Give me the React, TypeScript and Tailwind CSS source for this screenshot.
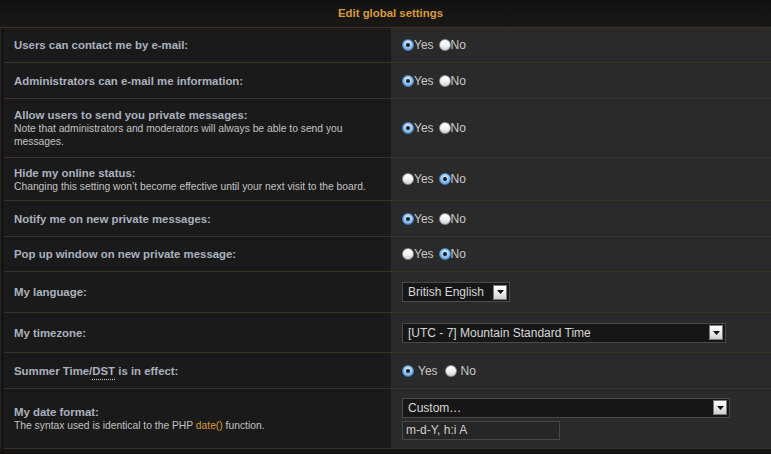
import React from "react";

function Radio({ checked }: { checked: boolean }) {
  return checked ? (
    <span className="relative inline-block w-[12px] h-[12px] rounded-full border border-[#4a7fb8] bg-[radial-gradient(circle_at_50%_35%,#e3f1fd_0%,#9cc9f2_45%,#4f95db_100%)] shrink-0">
      <span className="absolute left-1/2 top-1/2 w-[4px] h-[4px] -ml-[2px] -mt-[2px] rounded-full bg-[#0f1d2c]" />
    </span>
  ) : (
    <span className="inline-block w-[12px] h-[12px] rounded-full border border-[#8d8d8d] bg-[linear-gradient(#ffffff,#f4f4f4_50%,#d2d2d2)] shrink-0" />
  );
}

function YesNo({ yes, wide = false }: { yes: boolean; wide?: boolean }) {
  return (
    <div className="flex items-center text-[12px] text-[#c9c9c9]">
      <Radio checked={yes} />
      <span className={wide ? "ml-[4px]" : ""}>Yes</span>
      <span className={wide ? "ml-[7px]" : "ml-[5px]"} />
      <Radio checked={!yes} />
      <span className={wide ? "ml-[4px]" : ""}>No</span>
    </div>
  );
}

function Arrow() {
  return (
    <span className="flex items-center justify-center w-[14px] h-[15px] border border-[#7a7a7a] bg-[linear-gradient(#ffffff,#e6e6e6_60%,#cfcfcf)]">
      <svg width="7" height="4" viewBox="0 0 7 4">
        <path d="M0 0h7L3.5 4z" fill="#111" />
      </svg>
    </span>
  );
}

function Select({ text, w }: { text: string; w: string }) {
  return (
    <div
      className={`flex items-center justify-between h-[20px] ${w} bg-[#161616] border border-[#4a4a4a] pl-[5px] pr-[2px] text-[12px] text-[#d6d6d6]`}
    >
      <span>{text}</span>
      <Arrow />
    </div>
  );
}

function Row({
  h,
  title,
  desc,
  children,
}: {
  h: string;
  title: React.ReactNode;
  desc?: React.ReactNode;
  children: React.ReactNode;
}) {
  return (
    <div className={`flex ${h} border-b border-[#3b3228]`}>
      <div className="w-[388px] shrink-0 bg-[#1b1a1a] border-r border-[#2c2722] pl-[10px] pr-[10px] flex flex-col justify-center">
        <div className="text-[11.4px] leading-[14px] font-bold text-[#aab2bf]">{title}</div>
        {desc && <div className="text-[10.3px] leading-[13px] text-[#c2c2c2]">{desc}</div>}
      </div>
      <div className="flex-1 bg-[#2a2a2a] pl-[10px] flex flex-col justify-center">{children}</div>
    </div>
  );
}

export default function App() {
  return (
    <div className="w-[771px] h-[454px] overflow-hidden bg-[#151413] font-['Liberation_Sans',Arial,sans-serif]">
      <div className="h-[28px] border-b border-[#3b3228] bg-[linear-gradient(#121211,#1a1918)] flex items-center justify-center">
        <span className="text-[11.4px] font-bold text-[#d9993c] ml-[10px]">Edit global settings</span>
      </div>
      <div className="pl-[3px] border-l border-[#2a2520]">
        <Row h="h-[35px]" title="Users can contact me by e-mail:">
          <YesNo yes />
        </Row>
        <Row h="h-[36px]" title="Administrators can e-mail me information:">
          <YesNo yes />
        </Row>
        <Row
          h="h-[59px]"
          title="Allow users to send you private messages:"
          desc="Note that administrators and moderators will always be able to send you messages."
        >
          <YesNo yes />
        </Row>
        <Row
          h="h-[43px]"
          title="Hide my online status:"
          desc="Changing this setting won’t become effective until your next visit to the board."
        >
          <YesNo yes={false} />
        </Row>
        <Row h="h-[36px]" title="Notify me on new private messages:">
          <YesNo yes />
        </Row>
        <Row h="h-[35px]" title="Pop up window on new private message:">
          <YesNo yes={false} />
        </Row>
        <Row h="h-[41px]" title="My language:">
          <Select text="British English" w="w-[108px]" />
        </Row>
        <Row h="h-[40px]" title="My timezone:">
          <Select text="[UTC - 7] Mountain Standard Time" w="w-[324px]" />
        </Row>
        <Row
          h="h-[36px]"
          title={
            <>
              Summer Time/
              <span className="underline decoration-dotted decoration-[#c8c8c8] underline-offset-[4px]">DST</span> is in
              effect:
            </>
          }
        >
          <YesNo yes wide />
        </Row>
        <Row
          h="h-[60px]"
          title="My date format:"
          desc={
            <>
              The syntax used is identical to the PHP <span className="text-[#d9993c]">date()</span> function.
            </>
          }
        >
          <Select text="Custom…" w="w-[328px]" />
          <div className="mt-[3px] w-[158px] h-[19px] border border-[#474747] bg-[#262626] pl-[3px] flex items-center text-[12px] text-[#d0d0d0]">
            m-d-Y, h:i A
          </div>
        </Row>
      </div>
    </div>
  );
}
